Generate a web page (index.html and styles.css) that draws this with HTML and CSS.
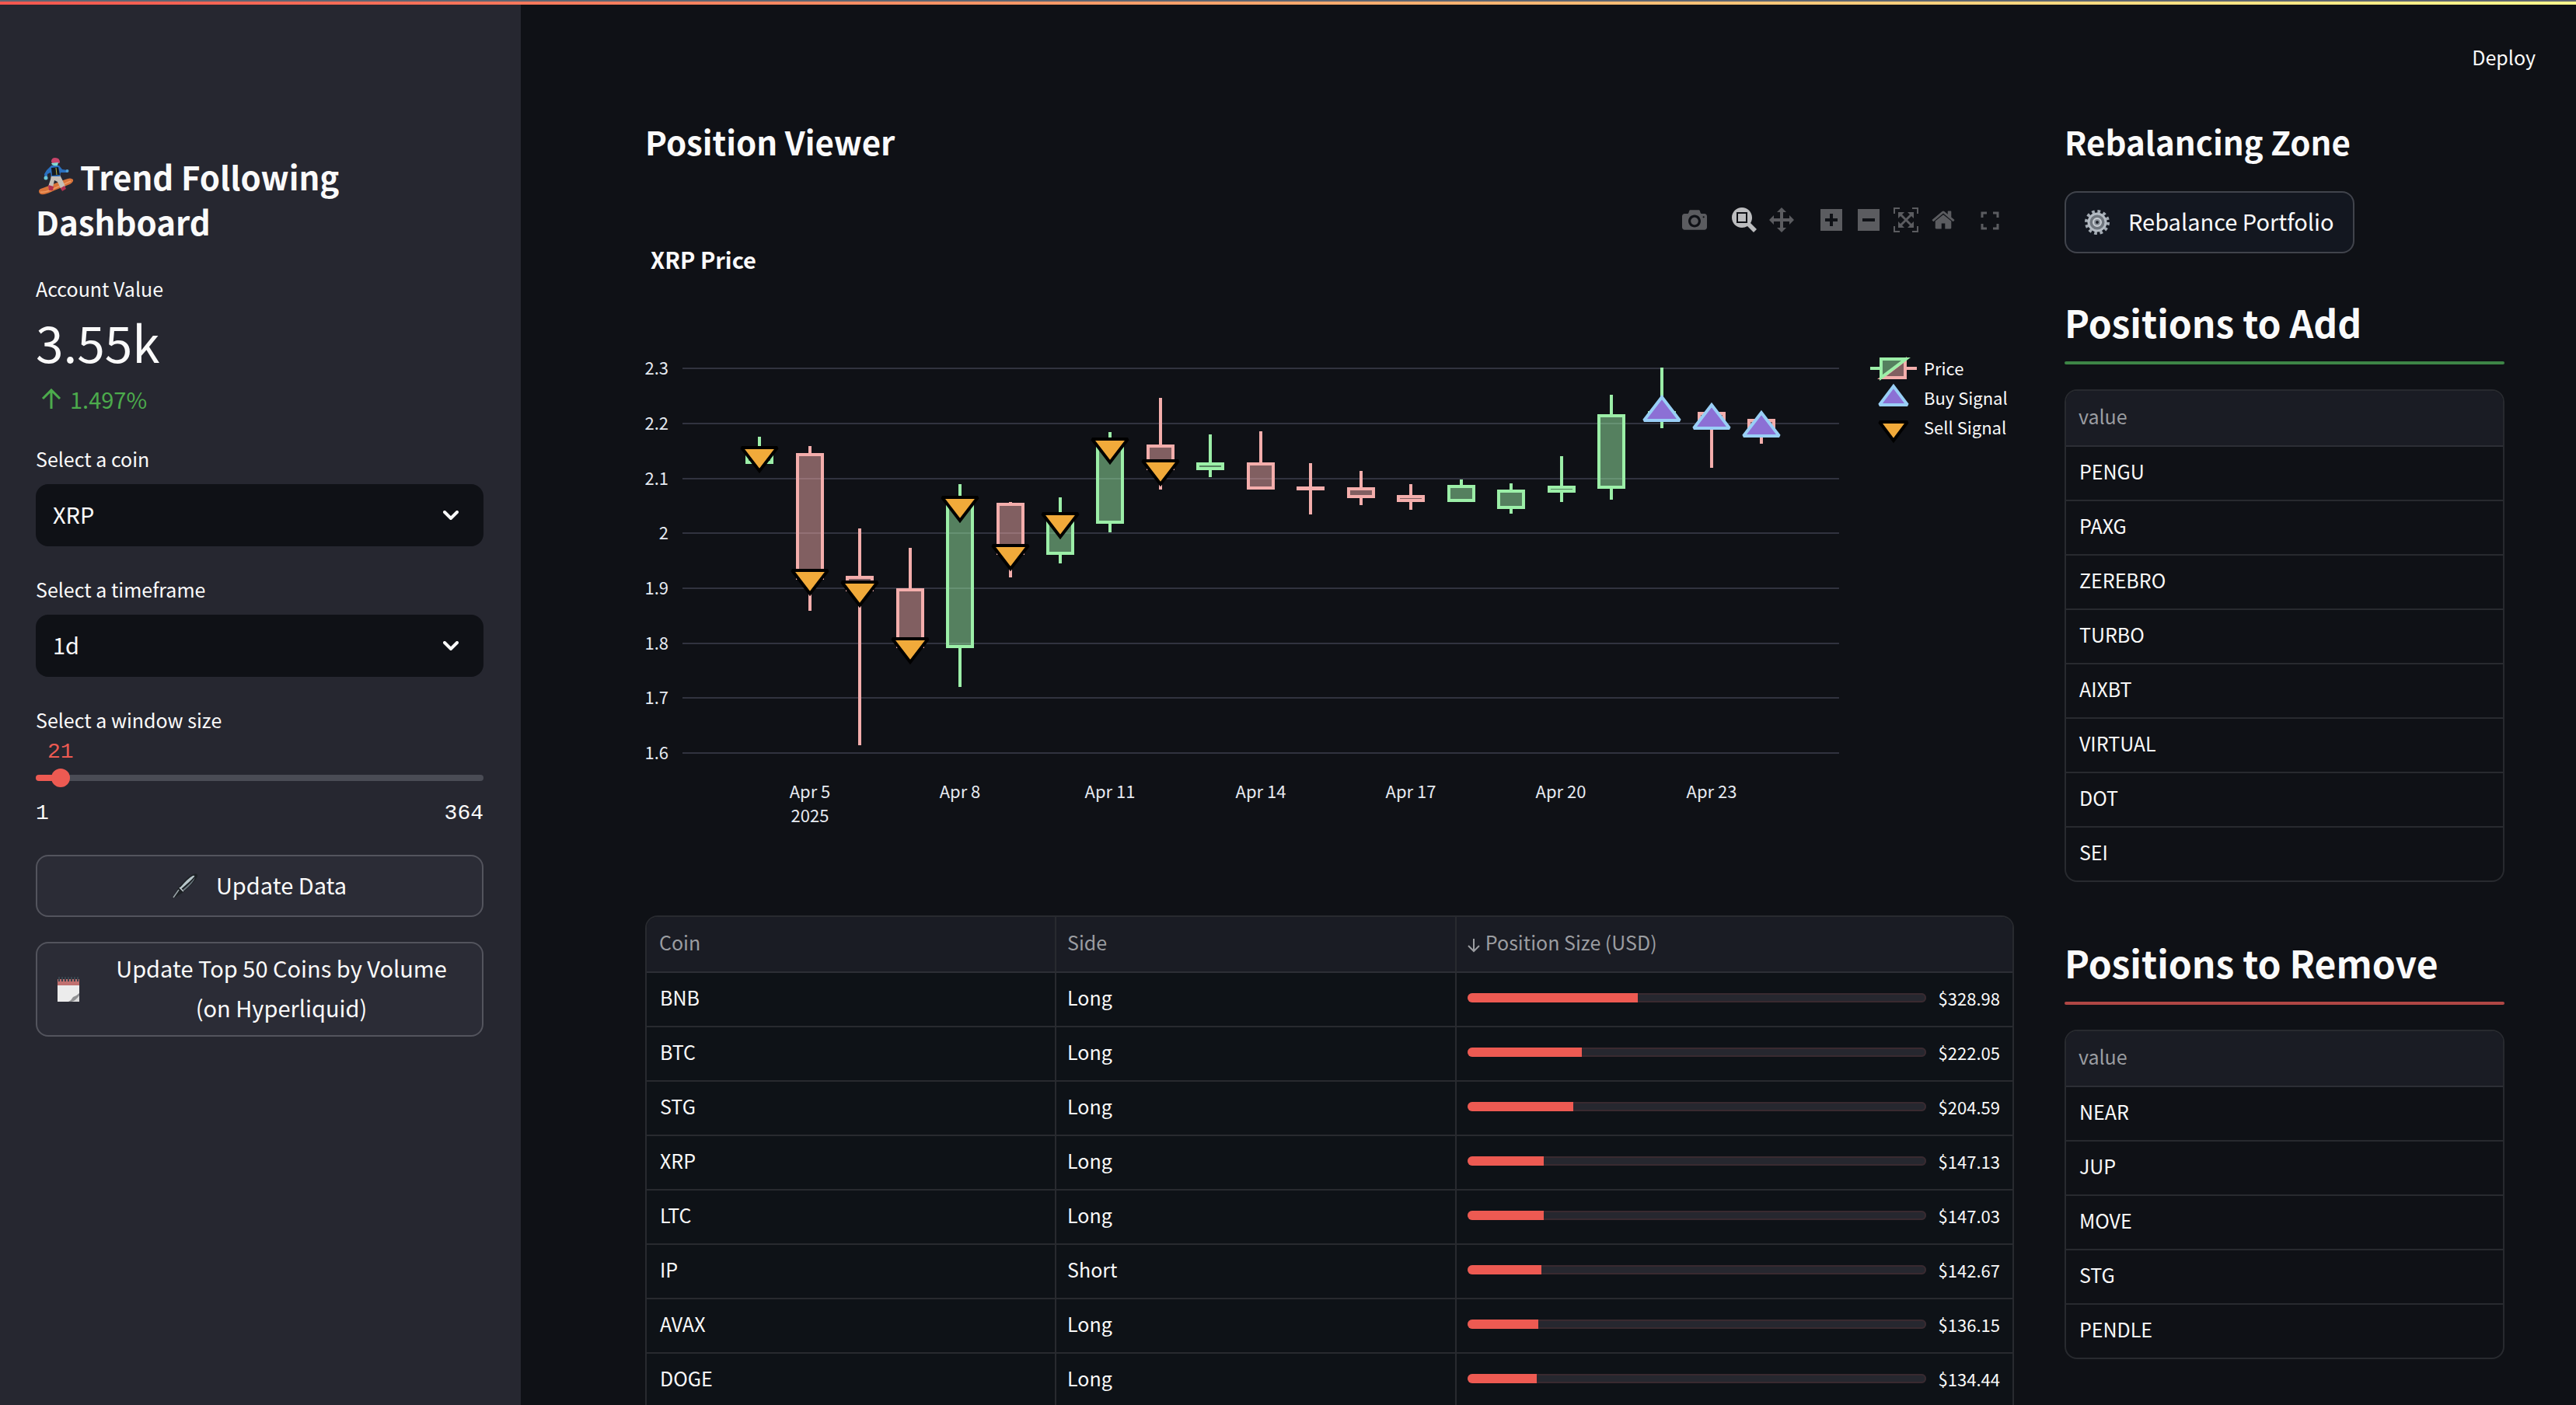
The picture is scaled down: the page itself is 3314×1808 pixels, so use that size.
FILE: index.html
```html
<!DOCTYPE html>
<html lang="en">
<head>
<meta charset="utf-8">
<title>Trend Following Dashboard</title>
<link rel="stylesheet" href="styles.css">
</head>
<body>
<div class="stripe"></div>
<div class="app">
  <aside class="sidebar">
    <h1 class="brand"><svg class="brand-icon" viewBox="0 0 64 64" aria-hidden="true">
        <path d="M10 52Q10 57 17 56Q22 55 30 51L50 43Q55 40 54 37Q51 34 44 37L15 48Q10 49 10 52Z" fill="#d8743a"/>
        <path d="M12 53Q16 54 24 51L51 39" fill="none" stroke="#ee9a62" stroke-width="1.5"/>
        <path d="M26 31L37 31L40 37L44 46L39 50L34 40L30 38L28 47L22 46L25 37Z" fill="#c5c0b8"/>
        <path d="M22 44L29 46L28 51L23 51ZM38 48L43 45L45 49L40 52Z" fill="#b2304f"/>
        <path d="M26 19L36 19L40 24L47 25L47 28L38 28L37 33L26 33L25 28L21 30L21 36L18 37L17 30L20 25Z" fill="#2a70bf"/>
        <path d="M26 22L35 21L37 31L27 32Z" fill="#121a22"/>
        <path d="M32 22L33 31" stroke="#b9b545" stroke-width="1"/>
        <circle cx="19" cy="35" r="2.500" fill="#6bc8d8"/><circle cx="46.500" cy="26" r="2" fill="#4f9ed4"/>
        <path d="M26 14Q26 9 31 9Q37 9 37 15L36 16L27 16Z" fill="#c9446a"/>
        <path d="M26 16L35 15L34 19Q30 20 27 18Z" fill="#7fd9d3"/>
      </svg>Trend Following Dashboard</h1>

    <section class="metric">
      <div class="label">Account Value</div>
      <div class="metric-value">3.55k</div>
      <div class="metric-delta"><svg viewBox="0 0 26 26" aria-hidden="true"><path d="M13 26V2M2 13L13 2L24 13" fill="none" stroke="currentColor" stroke-width="3"/></svg>1.497%</div>
    </section>

    <div class="field">
      <label class="label" for="coin">Select a coin</label>
      <div class="select">
        <select id="coin"><option>XRP</option></select>
        <svg class="chevron" viewBox="0 0 20 12" aria-hidden="true"><path d="M2 2L10 10L18 2" fill="none" stroke="currentColor" stroke-width="4" stroke-linecap="round"/></svg>
      </div>
    </div>
    <div class="field">
      <label class="label" for="timeframe">Select a timeframe</label>
      <div class="select">
        <select id="timeframe"><option>1d</option></select>
        <svg class="chevron" viewBox="0 0 20 12" aria-hidden="true"><path d="M2 2L10 10L18 2" fill="none" stroke="currentColor" stroke-width="4" stroke-linecap="round"/></svg>
      </div>
    </div>
    <div class="field">
      <label class="label" for="window">Select a window size</label>
      <output class="slider-value" for="window">21</output>
      <div class="slider">
        <div class="rail"></div>
        <input id="window" type="range" min="1" max="364" value="21">
      </div>
      <div class="slider-ends"><span>1</span><span>364</span></div>
    </div>

    <button class="button" type="button"><svg class="emoji" viewBox="0 0 32 32" aria-hidden="true">
        <path d="M0 32L7 19Q20 3 27 1Q32 -1 32 3Q31 9 14 24L3 31Z" fill="#1d2125"/>
        <path d="M9 19Q20 6 26 3Q29 2 28 4Q24 9 11 20Z" fill="#b7c6ca"/>
        <path d="M13 21Q24 12 29 5Q27 12 15 22Z" fill="#6c7980"/>
        <path d="M9 18L14 23" stroke="#c3ccd0" stroke-width="1.500"/><path d="M1 31L8 21" stroke="#9ba5aa" stroke-width="1.500"/>
      </svg><span>Update Data</span></button>
    <button class="button" type="button"><svg class="emoji" viewBox="0 0 32 32" aria-hidden="true">
        <path d="M2 3H30V32H2Z" fill="#ececec"/><path d="M2 3H30V11H2Z" fill="#c0706f"/>
        <path d="M4 0V6M8 0V6M12 0V6M16 0V6M20 0V6M24 0V6M28 0V6" stroke="#39434c" stroke-width="2"/>
        <path d="M16 32Q20 30 22 26Q26 25 30 21V32Z" fill="#8f9092"/><path d="M20 32Q25 31 30 24V32Z" fill="#dcdcdc"/>
      </svg><span>Update Top 50 Coins by Volume (on Hyperliquid)</span></button>
  </aside>

  <main class="main">
    <header class="topbar"><button class="deploy" type="button">Deploy</button></header>
    <div class="columns">
      <section class="viewer">
        <h2 class="heading">Position Viewer</h2>
        <div class="modebar">
          <button type="button" aria-label="Download plot"><svg viewBox="0 0 1000 1000"><path transform="matrix(1 0 0 -1 0 850)" d="m500 450c-83 0-150-67-150-150 0-83 67-150 150-150 83 0 150 67 150 150 0 83-67 150-150 150z m400 150h-120c-16 0-34 13-39 29l-31 93c-6 15-23 28-40 28h-340c-16 0-34-13-39-28l-31-94c-6-15-23-28-40-28h-120c-55 0-100-45-100-100v-450c0-55 45-100 100-100h800c55 0 100 45 100 100v450c0 55-45 100-100 100z m-400-550c-138 0-250 112-250 250 0 138 112 250 250 250 138 0 250-112 250-250 0-138-112-250-250-250z m365 380c-19 0-35 16-35 35 0 19 16 35 35 35 19 0 35-16 35-35 0-19-16-35-35-35z"/></svg></button>
          <span class="modebar-group">
            <button class="active" type="button" aria-label="Zoom"><svg viewBox="0 0 1000 1000"><path transform="matrix(1 0 0 -1 0 850)" d="m1000-25l-250 251c40 63 63 138 63 218 0 224-182 406-407 406-224 0-406-182-406-406s183-406 407-406c80 0 155 22 218 62l250-250 125 125z m-812 250l0 438 437 0 0-438-437 0z m62 375l313 0 0-312-313 0 0 312z"/></svg></button>
            <button type="button" aria-label="Pan"><svg viewBox="0 0 1000 1000"><path transform="matrix(1 0 0 -1 0 850)" d="m1000 350l-187 188 0-125-250 0 0 250 125 0-188 187-187-187 125 0 0-250-250 0 0 125-188-188 186-187 0 125 252 0 0-250-125 0 187-188 188 188-125 0 0 250 250 0 0-126 187 188z"/></svg></button>
          </span>
          <span class="modebar-group">
            <button type="button" aria-label="Zoom in"><svg viewBox="-62 0 1000 1000"><path transform="matrix(1 0 0 -1 0 850)" d="m1 787l0-875 875 0 0 875-875 0z m687-500l-187 0 0-187-125 0 0 187-188 0 0 125 188 0 0 187 125 0 0-187 187 0 0-125z"/></svg></button>
            <button type="button" aria-label="Zoom out"><svg viewBox="-62 0 1000 1000"><path transform="matrix(1 0 0 -1 0 850)" d="m0 788l0-876 876 0 0 876-876 0z m688-500l-500 0 0 125 500 0 0-125z"/></svg></button>
            <button type="button" aria-label="Autoscale"><svg viewBox="0 0 1000 1000"><path transform="matrix(1 0 0 -1 0 850)" d="m250 850l-187 0-63 0 0-62 0-188 63 0 0 188 187 0 0 62z m688 0l-188 0 0-62 188 0 0-188 62 0 0 188 0 62-62 0z m-875-938l0 188-63 0 0-188 0-62 63 0 187 0 0 62-187 0z m875 188l0-188-188 0 0-62 188 0 62 0 0 62 0 188-62 0z m-125 188l-1 0-93-94-156 156 156 156 92-93 2 0 0 250-250 0 0-2 93-92-156-156-156 156 94 92 0 2-250 0 0-250 0 0 93 93 157-156-157-156-93 94 0 0 0-250 250 0 0 0-94 93 156 157 156-157-93-93 0 0 250 0 0 250z"/></svg></button>
            <button type="button" aria-label="Reset axes"><svg viewBox="-36 0 1000 1000"><path transform="matrix(1 0 0 -1 0 850)" d="m786 296v-267q0-15-11-26t-25-10h-214v214h-143v-214h-214q-15 0-25 10t-11 26v267q0 1 0 2t0 2l321 264 321-264q1-1 1-4z m124 39l-34-41q-5-5-12-6h-2q-7 0-12 3l-386 322-386-322q-7-4-13-4-7 2-12 7l-35 41q-4 5-3 13t6 12l401 334q18 15 42 15t43-15l136-114v109q0 8 5 13t13 5h107q8 0 13-5t5-13v-227l122-102q5-5 6-12t-4-13z"/></svg></button>
          </span>
          <button type="button" aria-label="Fullscreen"><svg viewBox="0 0 32 32"><path d="M6 13V7H12M20 7H26V13M26 21V27H20M12 27H6V21" fill="none" stroke="currentColor" stroke-width="3"/></svg></button>
        </div>
        <h3 class="chart-title">XRP Price</h3>
        <svg class="chart" viewBox="830 353 1761 825" role="img" aria-label="XRP daily candles with buy and sell signals">
          <path class="grid" d="M878 474H2366M878 545H2366M878 616H2366M878 686H2366M878 757H2366M878 828H2366M878 898H2366M878 969H2366"/>
          <g class="axis axis-y">
            <text x="860" y="482">2.3</text><text x="860" y="553">2.2</text><text x="860" y="624">2.1</text><text x="860" y="694">2</text>
            <text x="860" y="765">1.9</text><text x="860" y="836">1.8</text><text x="860" y="906">1.7</text><text x="860" y="977">1.6</text>
          </g>
          <g class="axis axis-x">
            <text x="1042" y="1027">Apr 5</text><text x="1042" y="1058">2025</text><text x="1235" y="1027">Apr 8</text><text x="1428" y="1027">Apr 11</text>
            <text x="1622" y="1027">Apr 14</text><text x="1815" y="1027">Apr 17</text><text x="2008" y="1027">Apr 20</text><text x="2202" y="1027">Apr 23</text>
          </g>
          <g class="up">
            <path d="M977 562V586M961 586H993V595H961ZM977 595V597"/>
            <path d="M1235 623V650M1219 650H1251V832H1219ZM1235 832V884"/>
            <path d="M1364 640V671M1348 671H1380V712H1348ZM1364 712V725"/>
            <path d="M1428 556V575M1412 575H1444V672H1412ZM1428 672V685"/>
            <path d="M1557 559V597M1541 597H1573V603H1541ZM1557 603V614"/>
            <path d="M1880 617V626M1864 626H1896V644H1864ZM1880 644V646"/>
            <path d="M1944 622V632M1928 632H1960V653H1928ZM1944 653V661"/>
            <path d="M2009 587V627M1993 627H2025V632H1993ZM2009 632V646"/>
            <path d="M2073 508V535M2057 535H2089V627H2057ZM2073 627V643"/>
            <path d="M2138 473V531M2122 531H2154V535H2122ZM2138 535V551"/>
          </g>
          <g class="down">
            <path d="M1042 574V585M1026 585H1058V744H1026ZM1042 744V786"/>
            <path d="M1106 680V743M1090 743H1122V759H1090ZM1106 759V959"/>
            <path d="M1171 705V759M1155 759H1187V832H1155ZM1171 832V840"/>
            <path d="M1300 646V649M1284 649H1316V712H1284ZM1300 712V743"/>
            <path d="M1493 512V574M1477 574H1509V603H1477ZM1493 603V630"/>
            <path d="M1622 555V597M1606 597H1638V628H1606ZM1622 628V630"/>
            <path d="M1686 596V628M1670 628H1702V629H1670ZM1686 629V662"/>
            <path d="M1751 606V629M1735 629H1767V639H1735ZM1751 639V650"/>
            <path d="M1815 623V639M1799 639H1831V644H1799ZM1815 644V656"/>
            <path d="M2202 530V532M2186 532H2218V541H2186ZM2202 541V602"/>
            <path d="M2266 539V541M2250 541H2282V551H2250ZM2266 551V571"/>
          </g>
          <g class="buy">
            <path d="M2115 541H2161L2138 511Z"/><path d="M2179 551H2225L2202 521Z"/><path d="M2243 561H2289L2266 531Z"/>
            <path d="M2418 521H2454L2436 497Z"/>
          </g>
          <g class="sell">
            <path d="M954 576H1000L977 606Z"/><path d="M1019 734H1065L1042 764Z"/><path d="M1083 749H1129L1106 779Z"/>
            <path d="M1148 822H1194L1171 852Z"/><path d="M1212 640H1258L1235 670Z"/><path d="M1277 702H1323L1300 732Z"/>
            <path d="M1341 661H1387L1364 691Z"/><path d="M1405 565H1451L1428 595Z"/><path d="M1470 593H1516L1493 623Z"/>
            <path d="M2418 543H2454L2436 567Z"/>
          </g>
          <g class="down"><path d="M2451 463V486H2421ZM2451 474H2466"/></g>
          <g class="up"><path d="M2420 486V462H2452ZM2420 474H2406"/></g>
          <g class="axis legend"><text x="2475" y="483">Price</text><text x="2475" y="521">Buy Signal</text><text x="2475" y="559">Sell Signal</text></g>
        </svg>

        <div class="frame frame-open">
          <table class="grid-table positions">
            <colgroup><col class="col-coin"><col class="col-side"><col></colgroup>
            <thead><tr><th scope="col">Coin</th><th scope="col">Side</th><th scope="col"><svg class="sort" viewBox="0 0 16 18" aria-hidden="true"><path d="M8 0V16M1 9L8 16L15 9" fill="none" stroke="currentColor" stroke-width="2"/></svg>Position Size (USD)</th></tr></thead>
            <tbody>
              <tr><td>BNB</td><td>Long</td><td><div class="size"><div class="bar"><div class="fill" style="width:37.2%"></div></div>$328.98</div></td></tr>
              <tr><td>BTC</td><td>Long</td><td><div class="size"><div class="bar"><div class="fill" style="width:25%"></div></div>$222.05</div></td></tr>
              <tr><td>STG</td><td>Long</td><td><div class="size"><div class="bar"><div class="fill" style="width:23.1%"></div></div>$204.59</div></td></tr>
              <tr><td>XRP</td><td>Long</td><td><div class="size"><div class="bar"><div class="fill" style="width:16.6%"></div></div>$147.13</div></td></tr>
              <tr><td>LTC</td><td>Long</td><td><div class="size"><div class="bar"><div class="fill" style="width:16.6%"></div></div>$147.03</div></td></tr>
              <tr><td>IP</td><td>Short</td><td><div class="size"><div class="bar"><div class="fill" style="width:16.1%"></div></div>$142.67</div></td></tr>
              <tr><td>AVAX</td><td>Long</td><td><div class="size"><div class="bar"><div class="fill" style="width:15.4%"></div></div>$136.15</div></td></tr>
              <tr><td>DOGE</td><td>Long</td><td><div class="size"><div class="bar"><div class="fill" style="width:15.2%"></div></div>$134.44</div></td></tr>
            </tbody>
          </table>
        </div>
      </section>

      <section class="rebalance">
        <h2 class="heading">Rebalancing Zone</h2>
        <button class="button button-main" type="button"><svg class="emoji" viewBox="0 0 32 32" aria-hidden="true">
            <circle cx="16" cy="16" r="14" fill="none" stroke="#a3abb3" stroke-width="4" stroke-dasharray="3.700 3.630"/>
            <circle cx="16" cy="16" r="11" fill="#6f767e" stroke="#b4bbc3" stroke-width="3"/>
            <circle cx="16" cy="16" r="5" fill="#8b939b" stroke="#c9ced4" stroke-width="2"/><circle cx="16" cy="16" r="2" fill="#20242c"/>
          </svg><span>Rebalance Portfolio</span></button>
        <h2 class="big-heading">Positions to Add</h2>
        <hr class="rule rule-add">
        <div class="frame">
          <table class="grid-table">
            <thead><tr><th scope="col">value</th></tr></thead>
            <tbody>
              <tr><td>PENGU</td></tr><tr><td>PAXG</td></tr><tr><td>ZEREBRO</td></tr><tr><td>TURBO</td></tr>
              <tr><td>AIXBT</td></tr><tr><td>VIRTUAL</td></tr><tr><td>DOT</td></tr><tr><td>SEI</td></tr>
            </tbody>
          </table>
        </div>
        <h2 class="big-heading big-heading-next">Positions to Remove</h2>
        <hr class="rule rule-remove">
        <div class="frame">
          <table class="grid-table">
            <thead><tr><th scope="col">value</th></tr></thead>
            <tbody>
              <tr><td>NEAR</td></tr><tr><td>JUP</td></tr><tr><td>MOVE</td></tr><tr><td>STG</td></tr><tr><td>PENDLE</td></tr>
            </tbody>
          </table>
        </div>
      </section>
    </div>
  </main>
</div>
</body>
</html>
```
FILE: styles.css
```css
:root {
  --page: #0f1116;
  --side: #262730;
  --text: #fafafa;
  --muted: #9b9da1;
  --line: #282a2f;
  --accent: #ed5a52;
  --green: #9cefa8;
  --red: #f4aeac;
}

* { box-sizing: border-box; }

body {
  margin: 0;
  height: 100vh;
  display: flex;
  flex-direction: column;
  overflow: hidden;
  background: var(--page);
  color: var(--text);
  font-family: "Noto Sans CJK SC", "Noto Sans", sans-serif;
  font-size: 29px;
  line-height: 51px;
}

h1, h2, h3 { margin: 0; font-weight: 700; }
button, select, input { font: inherit; color: inherit; margin: 0; }
svg { display: block; }

.stripe {
  flex: none;
  height: 6px;
  border-top: 2px solid #5f6672;
  background: linear-gradient(90deg, #f4574f, #fff98c);
}

.app {
  flex: 1;
  min-height: 0;
  display: grid;
  grid-template-columns: 670px minmax(0, 1fr);
}

/* Sidebar */

.sidebar {
  display: flex;
  flex-direction: column;
  padding: 192px 48px 48px 46px;
  overflow: hidden;
  background: var(--side);
}

.brand { font-size: 42px; line-height: 58px; }
.brand-icon { display: inline-block; width: 64px; height: 64px; margin: -10px -1px -5px -6px; vertical-align: -8px; }

.metric { margin: 36px 0 30px; }
.metric .label { line-height: 42px; }
.label { display: block; font-size: 25px; line-height: 40px; }
.metric-value { font-size: 64px; line-height: 94px; }
.metric-delta { display: flex; align-items: center; gap: 11px; padding-left: 7px; line-height: 54px; color: #4cab4c; }
.metric-delta svg { width: 26px; height: 26px; }

.field { margin-bottom: 35px; }
.field:last-of-type { margin-bottom: 37px; }

.select { display: grid; align-items: center; margin-top: 13px; }
.select select {
  grid-area: 1 / 1;
  width: 100%;
  height: 80px;
  padding: 0 80px 4px 22px;
  border: 0;
  border-radius: 16px;
  background: var(--page);
  appearance: none;
}
.chevron { grid-area: 1 / 1; justify-self: end; width: 20px; height: 12px; margin-right: 32px; pointer-events: none; }

.slider-value, .slider-ends { font-family: "Liberation Mono", monospace; font-size: 28px; line-height: 32px; }
.slider-value { display: block; margin: 6px 0 5px 15px; color: var(--accent); }
.slider { display: grid; align-items: center; height: 24px; }
.rail {
  grid-area: 1 / 1;
  height: 8px;
  border-radius: 4px;
  background: linear-gradient(90deg, var(--accent) 32px, #4a4c55 32px);
}
.slider input {
  grid-area: 1 / 1;
  width: calc(100% + 24px);
  height: 24px;
  margin: 0 -12px;
  background: none;
  appearance: none;
}
.slider input::-webkit-slider-thumb {
  width: 24px;
  height: 24px;
  border-radius: 50%;
  background: var(--accent);
  appearance: none;
}
.slider-ends { display: flex; justify-content: space-between; margin-top: 18px; }

.button {
  display: flex;
  align-items: center;
  justify-content: center;
  gap: 24px;
  min-height: 80px;
  padding: 8px 24px;
  border: 2px solid #53545d;
  border-radius: 16px;
  background: #2b2c36;
}
.button + .button { margin-top: 32px; }
.button span { min-width: 0; margin: -2px 0 2px; }
.emoji { flex: none; width: 32px; height: 32px; }

/* Main area */

.main { overflow: auto; scrollbar-width: none; }

.topbar { display: flex; justify-content: flex-end; height: 147px; padding: 47px 52px 0 0; }
.deploy { height: 40px; padding: 0; border: 0; background: none; font-size: 25px; line-height: 40px; }

.columns {
  display: grid;
  grid-template-columns: minmax(0, 28fr) minmax(0, 9fr);
  gap: 65px;
  padding: 0 92px 0 160px;
}

.heading { font-size: 42px; line-height: 58px; }

.modebar { display: flex; justify-content: flex-end; gap: 16px; margin: 56px 7px 14px 0; color: #5b5c60; }
.modebar-group { display: flex; }
.modebar button { width: 48px; height: 32px; padding: 0 8px; border: 0; background: none; }
.modebar svg { width: 32px; height: 32px; fill: currentColor; }
.modebar .active { color: #bcbdbf; }
.modebar > button:last-child { margin-left: -4px; }

.chart-title { padding-left: 7px; font-size: 29px; line-height: 40px; }

.chart { width: 100%; height: auto; }
.grid { fill: none; stroke: #31333f; stroke-width: 2; }
.axis { font-size: 22px; fill: #e6eaf1; }
.axis-y { text-anchor: end; }
.axis-x { text-anchor: middle; }
.legend { fill: var(--text); }
.up, .down { stroke-width: 4; }
.up { stroke: var(--green); fill: rgba(156, 239, 168, 0.5); }
.down { stroke: var(--red); fill: rgba(244, 174, 172, 0.5); }
.buy, .sell { stroke-width: 4; stroke-miterlimit: 2; }
.buy { fill: #8c70d5; stroke: #99cff6; }
.sell { fill: #f1aa3a; stroke: #000; }

/* Data tables */

.frame { overflow: hidden; border: 2px solid var(--line); border-radius: 16px; }
.frame-open { border-bottom: 0; border-radius: 16px 16px 0 0; }
.grid-table {
  width: 100%;
  border-collapse: separate;
  border-spacing: 0;
  table-layout: fixed;
  font-size: 25px;
  line-height: 40px;
}
.grid-table th, .grid-table td {
  height: 70px;
  padding: 0 16px 6px;
  border-bottom: 2px solid var(--line);
  text-align: left;
}
.grid-table th { height: 72px; background: #1a1c24; color: var(--muted); font-weight: 400; }
.grid-table td { padding-left: 17px; }
.grid-table tr:last-child td { height: 68px; border-bottom: 0; }
.grid-table thead tr:last-child th { border-bottom: 2px solid #2c2e35; }
.positions th:not(:last-child), .positions td:not(:last-child) { border-right: 2px solid var(--line); }
.positions td { background: #0e1217; }
.positions th + th, .positions td + td { padding-left: 14px; }
.positions td:last-child { padding-bottom: 3px; }
.positions tbody tr:last-child td { height: 70px; border-bottom: 2px solid var(--line); }
.col-coin { width: 30%; }
.col-side { width: 29.300%; }
.sort { display: inline-block; width: 16px; height: 18px; margin-right: 7px; vertical-align: -3px; }

.size { display: flex; align-items: center; justify-content: space-between; gap: 16px; font-size: 22px; }
.bar { flex: 1; height: 12px; border-radius: 6px; overflow: hidden; background: #26272f; box-shadow: inset 0 0 0 2px #392a30; }
.fill { height: 100%; background: var(--accent); }

/* Rebalancing column */

.button-main { margin-top: 35px; background: #131720; border-color: #41444c; }
.big-heading { margin-top: 54px; font-size: 48px; line-height: 68px; }
.big-heading-next { margin-top: 69px; }
.rule { height: 4px; margin: 17px 0 32px; border: 0; border-radius: 2px; }
.rule-add { background: #3d8546; }
.rule-remove { background: #b04745; }
```
